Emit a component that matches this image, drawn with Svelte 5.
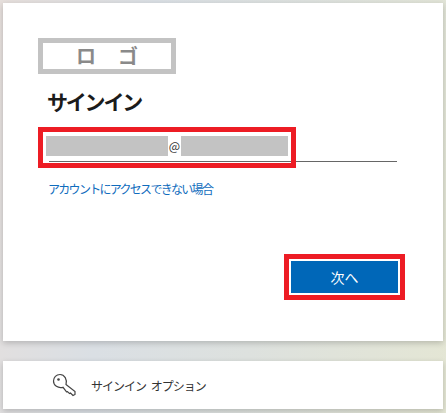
<script lang="ts">
	const title = 'サインイン';
	const linkLabel = 'アカウントにアクセスできない場合';
	const nextLabel = '次へ';
	const optionsLabel = 'サインイン オプション';
</script>

<div class="page">
	<section class="card main">
		<div class="logo"><span>ロ</span><span>ゴ</span></div>
		<h1>{title}</h1>

		<div class="field">
			<div class="value">
				<span class="mask first"></span>
				<span class="at">@</span>
				<span class="mask second"></span>
			</div>
			<div class="highlight"></div>
		</div>

		<a class="link" href="#top">{linkLabel}</a>

		<div class="actions">
			<div class="next-wrap">
				<button type="button">{nextLabel}</button>
			</div>
		</div>
	</section>

	<section class="card options">
		<svg class="key" width="24" height="24" viewBox="0 0 24 24" fill="none" stroke="#444" stroke-width="1.2" aria-hidden="true">
			<path d="M14 11.6 23 18.5v3l-2 1-2.5-2.5-1 .6-2-2-1 .3L11 14.3C6 15.6 1.5 12.6 1.5 8 1.5 4.2 4.3 1.5 8 1.5c4.6 0 7.4 5 6 10.1z" />
			<circle cx="6.5" cy="6.5" r="1.3" fill="#444" stroke="none" />
		</svg>
		<span class="options-label">{optionsLabel}</span>
	</section>
</div>

<style>
	:global(body) {
		margin: 0;
	}

	.page {
		width: 446px;
		height: 413px;
		box-sizing: border-box;
		padding: 3px 3px 0;
		overflow: hidden;
		background: linear-gradient(100deg, #e6dfdc 0%, #dadfe4 30%, #dde1de 60%, #e4e6d4 100%);
		font-family: "Noto Sans CJK JP", "Noto Sans", sans-serif;
	}

	.card {
		background: #fff;
		box-shadow: 0 2px 6px rgba(0, 0, 0, 0.2);
	}

	.main {
		height: 338px;
		box-sizing: border-box;
		padding: 35px 0 0 35px;
	}

	.logo {
		width: 138px;
		height: 36px;
		box-sizing: border-box;
		border: 5px solid #c3c3c3;
		display: flex;
		justify-content: center;
		align-items: center;
		gap: 22px;
		color: #8a8a8a;
		font-size: 20px;
		font-weight: 700;
		line-height: 1;
	}

	h1 {
		margin: 12px 0 0 9px;
		color: #1b1b1b;
		font-size: 21px;
		font-weight: 700;
		line-height: 30px;
		letter-spacing: -2.2px;
	}

	.field {
		position: relative;
		width: 348px;
		height: 25px;
		margin: 20px 0 0 11px;
		border-bottom: 1px solid #666;
	}

	.value {
		display: flex;
		align-items: center;
		height: 20px;
		margin-left: -3px;
	}

	.mask {
		display: block;
		height: 20px;
		background: #c3c3c3;
	}

	.first {
		width: 122px;
	}

	.second {
		width: 107px;
	}

	.at {
		width: 13px;
		text-align: center;
		color: #333;
		font-size: 12px;
		line-height: 20px;
	}

	/* red annotation drawn over the input */
	.highlight {
		position: absolute;
		left: -11px;
		top: -9px;
		width: 258px;
		height: 41px;
		box-sizing: border-box;
		border: 5px solid #ed1c24;
	}

	.link {
		display: block;
		margin: 17px 0 0 10px;
		color: #0f6cbd;
		font-size: 12px;
		line-height: 20px;
		letter-spacing: -1.7px;
		text-decoration: none;
	}

	.actions {
		display: flex;
		justify-content: flex-end;
		margin: 55px 38px 0 0;
	}

	.next-wrap {
		box-sizing: border-box;
		width: 121px;
		height: 46px;
		padding: 2px;
		border: 5px solid #ed1c24;
		background: #fff;
	}

	button {
		display: block;
		width: 100%;
		height: 100%;
		padding: 0;
		border: 0;
		background: #0067b8;
		color: #fff;
		font-family: inherit;
		font-size: 14px;
		line-height: 1;
	}

	.options {
		display: flex;
		align-items: center;
		height: 48px;
		margin-top: 20px;
		padding-left: 49px;
	}

	.key {
		flex: none;
	}

	.options-label {
		margin-left: 15px;
		color: #333;
		font-size: 12px;
		letter-spacing: -1px;
		word-spacing: 3px;
	}
</style>
